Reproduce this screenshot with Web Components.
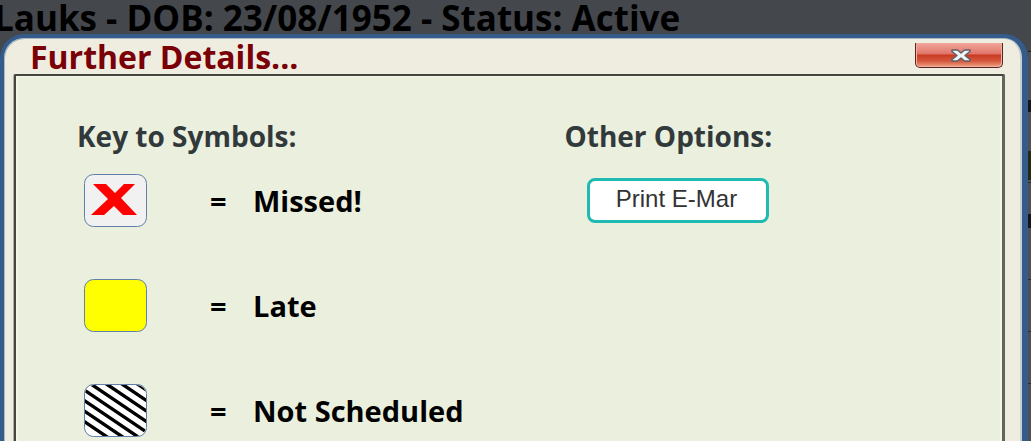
<!DOCTYPE html>
<html lang="en">
<head>
<meta charset="utf-8">
<title>Further Details</title>
<style>
  html, body {
    height: 100%;
  }
  body {
    margin: 0;
    overflow: hidden;
    background: #44474c;
    font-family: "Open Sans", "Noto Sans", sans-serif;
    font-weight: 700;
    color: #000;
  }
</style>
</head>
<body>
<emar-page>
  <patient-bar slot="bar">Lauks - DOB: 23/08/1952 - Status: Active</patient-bar>
  <details-dialog heading="Further Details...">
    <option-group heading="Key to Symbols:">
      <key-row symbol="missed">Missed!</key-row>
      <key-row symbol="late">Late</key-row>
      <key-row symbol="unscheduled">Not Scheduled</key-row>
    </option-group>
    <option-group heading="Other Options:">
      <action-button>Print E-Mar</action-button>
    </option-group>
  </details-dialog>
</emar-page>

<script>
class EmarPage extends HTMLElement {
  constructor() {
    super();
    this.attachShadow({ mode: 'open' });
    this.shadowRoot.innerHTML = `
      <style>
        :host {
          display: flex;
          flex-direction: column;
          min-height: 100%;
        }
        main {
          flex: 1;
          display: flex;
        }
        ::slotted(details-dialog) {
          flex: 1;
        }
        /* sliver of the chart behind the dialog */
        .chart-edge {
          width: 3px;
          background: linear-gradient(
            #44474c 17px, #1c1c1e 17px 18px, #505052 18px 66px,
            #161616 66px 78px, #505052 78px 117px, #222c14 117px 146px,
            #505052 146px 148px, #2a2a2c 148px 149px, #505052 149px 180px,
            #161616 180px 194px, #505052 194px 245px, #242c38 245px 246px,
            #505052 246px 297px, #242c38 297px 298px, #505052 298px 349px,
            #242c38 349px 350px, #505052 350px);
        }
      </style>
      <slot name="bar"></slot>
      <main>
        <slot></slot>
        <div class="chart-edge"></div>
      </main>
    `;
  }
}

class PatientBar extends HTMLElement {
  constructor() {
    super();
    this.attachShadow({ mode: 'open' });
    this.shadowRoot.innerHTML = `
      <style>
        :host {
          display: block;
          height: 34px;
          line-height: 36px;
          font-size: 35px;
          margin-left: -6px;
          white-space: nowrap;
        }
      </style>
      <slot></slot>
    `;
  }
}

class DetailsDialog extends HTMLElement {
  constructor() {
    super();
    this.attachShadow({ mode: 'open' });
    this.shadowRoot.innerHTML = `
      <style>
        :host {
          display: flex;
          flex-direction: column;
          box-sizing: border-box;
          border: 4px solid #355b8b;
          border-right-width: 6px;
          border-bottom: 0;
          border-radius: 24px 24px 0 0;
          background: #efece0;
          box-shadow: inset 1px 1px 0 #a9b9c4, inset -2px 0 0 #c5ced0;
          padding: 0 17px 0 10px;
        }
        header {
          display: flex;
          justify-content: space-between;
          height: 36px;
          padding-left: 16px;
        }
        h1 {
          margin: 0;
          font-size: 32px;
          line-height: 38px;
          color: #790007;
        }
        button {
          display: flex;
          align-items: center;
          justify-content: center;
          width: 88px;
          height: 25px;
          margin-top: 5px;
          margin-right: 2px;
          padding: 0 0 0 4px;
          border: 1px solid #5c2420;
          border-top: 0;
          border-radius: 0 0 5px 5px;
          background: linear-gradient(#f2a79c, #e07568 45%, #c93b22 50%, #d4573c 75%, #f0a384);
          box-shadow: inset 1px 0 0 #f0b0a6, inset -1px -1px 0 #f0b0a6;
        }
        section {
          flex: 1;
          display: grid;
          grid-template-columns: 488fr 438fr;
          align-items: start;
          border: 2px solid #44463f;
          border-right: 3px solid #61675c;
          border-bottom: 0;
          border-radius: 2px 2px 0 0;
          background: #ebefde;
          box-shadow: inset 2px 1px 0 #f4f7e6, inset -2px 0 0 #f4f7e6, -1px 0 0 #aeb0a9;
          padding: 42px 0 0 61px;
        }
      </style>
      <header>
        <h1></h1>
        <button type="button" aria-label="Close">
          <svg width="22" height="15" viewBox="0 0 22 15">
            <path d="M2 2 H7.5 L11 5 L14.5 2 H20 V3.5 L15 7.5 L20 11.5 V13 H14.5 L11 10 L7.5 13 H2 V11.5 L7 7.5 L2 3.5 Z"
              fill="#f1f2f2" stroke="#5c606c" stroke-width="1.5" stroke-linejoin="round"/>
          </svg>
        </button>
      </header>
      <section><slot></slot></section>
    `;
  }

  connectedCallback() {
    this.setAttribute('role', 'dialog');
    this.shadowRoot.querySelector('h1').textContent = this.getAttribute('heading');
  }
}

class OptionGroup extends HTMLElement {
  constructor() {
    super();
    this.attachShadow({ mode: 'open' });
    this.shadowRoot.innerHTML = `
      <style>
        :host {
          display: block;
        }
        h2 {
          margin: 0 0 20px;
          font-size: 28px;
          line-height: 36px;
          color: #31393b;
          white-space: nowrap;
        }
        div {
          display: flex;
          flex-direction: column;
          align-items: flex-start;
          gap: 52px;
          padding-left: 7px;
        }
        ::slotted(action-button) {
          margin: 4px 16px;
        }
      </style>
      <h2></h2>
      <div><slot></slot></div>
    `;
  }

  connectedCallback() {
    this.shadowRoot.querySelector('h2').textContent = this.getAttribute('heading');
  }
}

const symbols = {
  missed: `
    <rect class="box" x="0.5" y="0.5" width="62" height="52" rx="9" fill="#f1f1f1"/>
    <path d="M9 10 H22 L31 19 L40 10 H51 L37 24 L53 41 H39 L30 32 L20 41 H7 L24 25 Z" fill="#f00"/>`,
  late: `
    <rect class="box" x="0.5" y="0.5" width="62" height="52" rx="9" fill="#ff0"/>`,
  unscheduled: `
    <clipPath id="clip"><rect x="1" y="1" width="61" height="51" rx="9"/></clipPath>
    <rect x="0.5" y="0.5" width="62" height="52" rx="9" fill="#fff"/>
    <path clip-path="url(#clip)" stroke="#000" stroke-width="3.4"
      d="M-2 36 L38 63 M-2 25.5 L58 66 M-2 15 L68 62.3 M-2 4.5 L68 51.8 M-2 -6 L68 41.3 M-2 -16.5 L68 30.8 M-2 -27 L68 20.3 M-2 -37.5 L68 9.8"/>
    <rect class="box" x="0.5" y="0.5" width="62" height="52" rx="9" fill="none"/>`
};

class KeyRow extends HTMLElement {
  constructor() {
    super();
    this.attachShadow({ mode: 'open' });
  }

  connectedCallback() {
    this.shadowRoot.innerHTML = `
      <style>
        :host {
          display: grid;
          grid-template-columns: 63px 106px auto;
          font-size: 29px;
          line-height: 54px;
          height: 53px;
          white-space: nowrap;
        }
        svg {
          display: block;
        }
        .box {
          stroke: #6080a9;
        }
        .equals {
          padding-left: 63px;
        }
      </style>
      <svg width="63" height="53" viewBox="0 0 63 53" aria-hidden="true">${symbols[this.getAttribute('symbol')]}</svg>
      <span class="equals">=</span>
      <span><slot></slot></span>
    `;
  }
}

class ActionButton extends HTMLElement {
  constructor() {
    super();
    this.attachShadow({ mode: 'open' });
    this.shadowRoot.innerHTML = `
      <style>
        :host {
          display: block;
        }
        button {
          display: block;
          width: 182px;
          height: 45px;
          padding: 0 4px 4px 0;
          border: 3px solid #1fbab2;
          border-radius: 8px;
          background: #fff;
          font: 24px "Liberation Sans", Arial, sans-serif;
          color: #333;
        }
      </style>
      <button type="button"><slot></slot></button>
    `;
  }
}

customElements.define('emar-page', EmarPage);
customElements.define('patient-bar', PatientBar);
customElements.define('details-dialog', DetailsDialog);
customElements.define('option-group', OptionGroup);
customElements.define('key-row', KeyRow);
customElements.define('action-button', ActionButton);
</script>
</body>
</html>
